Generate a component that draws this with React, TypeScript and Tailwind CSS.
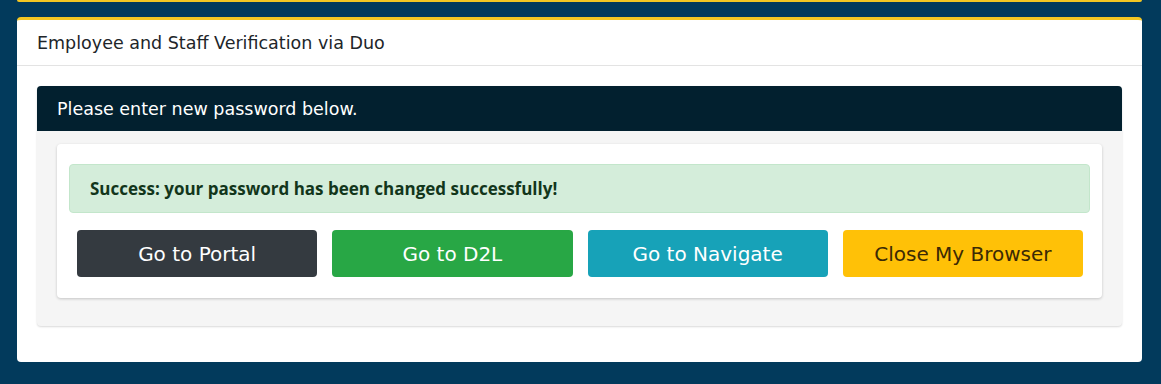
import React from "react";

const font = { fontFamily: '"DejaVu Sans", "Open Sans", sans-serif' };
const alertFont = { fontFamily: '"Open Sans", "DejaVu Sans", sans-serif' };

export default function App() {
  return (
    <div className="min-h-[384px] w-full bg-[#023a5c] text-[#212529]" style={font}>
      <div className="mx-[17px] mr-[19px] h-[2px] rounded-b-sm bg-[#f3c623]" />
      <div className="ml-[17px] mr-[19px] mt-[15px] overflow-hidden rounded-[4px] border-t-[3px] border-[#f3c623] bg-white">
        <div className="flex h-[46px] items-center border-b border-[#e3e3e3] px-5 pt-[1px] text-[17.5px] text-[#212529]">
          Employee and Staff Verification via Duo
        </div>
        <div className="px-5 pt-5 pb-9">
          <div className="overflow-hidden rounded-[4px] bg-[#f5f5f5] shadow-[0_1px_2px_rgba(0,0,0,0.15)]">
            <div className="flex h-[45px] items-center bg-[#02202f] px-5 pt-[1px] text-[17.5px] text-white">
              Please enter new password below.
            </div>
            <div className="px-5 pt-[13px] pb-[28px]">
              <div className="rounded-[4px] bg-white px-3 pt-5 pb-[21px] shadow-[0_1px_3px_rgba(0,0,0,0.2)]">
                <div
                  className="flex h-[49px] items-center rounded-[4px] border border-[#c3e6cb] bg-[#d4edda] px-5 text-[17px] font-bold text-[#12361b]"
                  style={alertFont}
                >
                  Success: your password has been changed successfully!
                </div>
                <div className="mt-[17px] grid grid-cols-4 gap-[15px] pl-2 pr-[7px]">
                  <button className="h-[47px] rounded-[4px] bg-[#343a40] text-[20px] text-white">Go to Portal</button>
                  <button className="h-[47px] rounded-[4px] bg-[#28a745] text-[20px] text-white">Go to D2L</button>
                  <button className="h-[47px] rounded-[4px] bg-[#17a2b8] text-[20px] text-white">Go to Navigate</button>
                  <button className="h-[47px] rounded-[4px] bg-[#ffc107] text-[20px] text-[#3b2a05]">Close My Browser</button>
                </div>
              </div>
            </div>
          </div>
        </div>
      </div>
    </div>
  );
}
